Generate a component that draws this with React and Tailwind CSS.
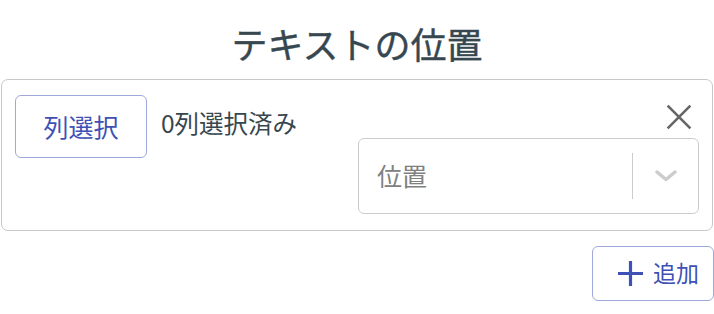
import React from "react";

const font = { fontFamily: '"Noto Sans CJK JP", "Noto Sans", sans-serif' };

export default function App() {
  return (
    <div className="w-[714px] h-[314px] bg-white overflow-hidden" style={font}>
      <div className="h-[79px] flex items-center justify-center pt-[6px]">
        <h1 className="text-[36px] leading-none text-[#37474f] font-normal [-webkit-text-stroke:0.4px_#37474f]">テキストの位置</h1>
      </div>
      <div className="ml-[1px] w-[712px] h-[152px] border border-[#c8c8c8] rounded-[7px] flex px-[13px] pt-[15px]">
        <div className="flex items-center self-start">
          <button className="w-[132px] h-[63px] border border-[#9fa8da] rounded-[6px] text-[#3f51b5] text-[25px] flex items-center justify-center">
            列選択
          </button>
          <span className="ml-[14px] text-[24.5px] text-[#37474f] -mt-[6px]">0列選択済み</span>
        </div>
        <div className="ml-auto w-[341px] flex flex-col items-end">
          <div className="w-[40px] h-[40px] mt-[2px] flex items-center justify-center">
            <svg width="26" height="26" viewBox="0 0 24 24" fill="none" stroke="#666" strokeWidth="2.4" strokeLinecap="butt">
              <path d="M1.5 1.5 L22.5 22.5 M22.5 1.5 L1.5 22.5" />
            </svg>
          </div>
          <div className="mt-[1px] w-[341px] h-[76px] border border-[#cccccc] rounded-[6px] flex items-center">
            <span className="pl-[18px] flex-1 text-[25px] text-[#808080]">位置</span>
            <div className="w-[1px] h-[46px] bg-[#cccccc]" />
            <div className="w-[65px] flex items-center justify-center">
              <svg width="22" height="12" viewBox="0 0 22 12" fill="none" stroke="#cccccc" strokeWidth="3.5" strokeLinecap="round" strokeLinejoin="round">
                <path d="M2 2 L11 9.5 L20 2" />
              </svg>
            </div>
          </div>
        </div>
      </div>
      <div className="flex justify-end mt-[15px]">
        <button className="w-[122px] h-[55px] border border-[#9fa8da] rounded-[6px] text-[#3f51b5] flex items-center pl-[25px]">
          <svg width="25" height="25" viewBox="0 0 25 25" fill="none" stroke="#3f51b5" strokeWidth="3.2">
            <path d="M12.5 0 V25 M0 12.5 H25" />
          </svg>
          <span className="ml-[10px] text-[23px] -mt-[2px]">追加</span>
        </button>
      </div>
    </div>
  );
}
